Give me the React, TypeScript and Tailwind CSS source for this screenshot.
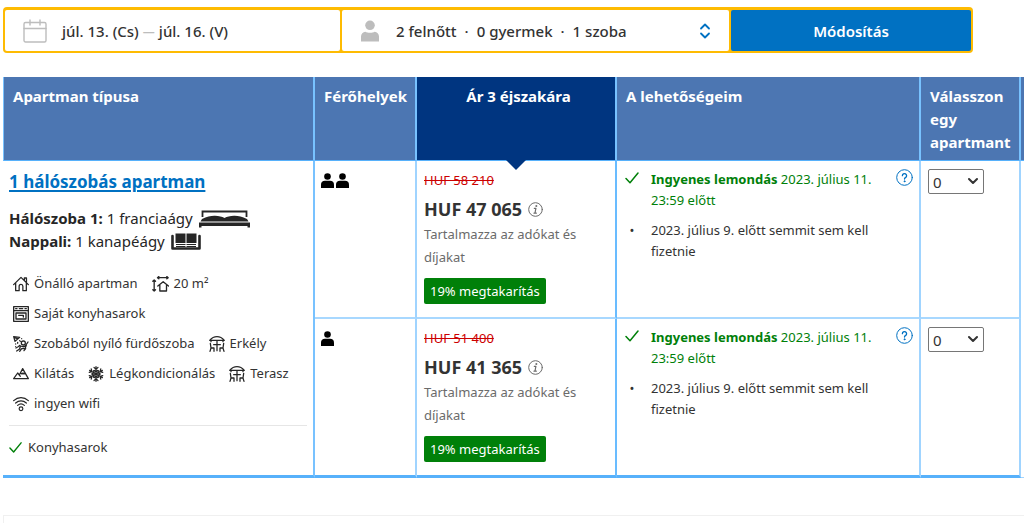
import React from "react";

type IconProps = { className?: string };

const stroke = {
  fill: "none",
  stroke: "currentColor",
  strokeWidth: 1.5,
  strokeLinecap: "round" as const,
  strokeLinejoin: "round" as const,
};

function CalendarIcon() {
  return (
    <svg className="h-6 w-6 shrink-0 text-[#bdbdbd]" viewBox="0 0 24 24" aria-hidden="true" {...stroke} strokeWidth={1.4}>
      <rect x="1" y="3.500" width="22" height="19.500" rx="1.5" />
      <path d="M1 9.500h22M7 1v5M17 1v5" />
    </svg>
  );
}

function PersonIcon({ className }: IconProps) {
  return (
    <svg className={className} viewBox="0 0 18 21" aria-hidden="true" fill="currentColor">
      <circle cx="9" cy="4.800" r="4.800" />
      <path d="M0 21v-5C0 13.200 2 11.800 4.300 11.200 5.600 12 7.200 12.300 9 12.300s3.400-.3 4.700-1.100C16 11.800 18 13.200 18 16v5z" />
    </svg>
  );
}

function GuestIcon() {
  return (
    <svg className="h-[15px] w-[13px] text-black" viewBox="0 0 13 15" aria-hidden="true" fill="currentColor">
      <circle cx="6.500" cy="3.500" r="3.300" />
      <path d="M0 15v-3.500C0 9 1.500 7.700 4 7.700h5c2.500 0 4 1.300 4 3.800V15z" />
    </svg>
  );
}

function UpDownIcon() {
  return (
    <svg className="h-4 w-3 shrink-0 text-[#0071c2]" viewBox="0 0 12 16" aria-hidden="true" {...stroke} strokeWidth={1.8}>
      <path d="M2 5.500l4-4 4 4M2 10.500l4 4 4-4" />
    </svg>
  );
}

function BedIcon() {
  return (
    <svg className="h-[18px] w-[51px] shrink-0" viewBox="0 0 51 18" aria-hidden="true">
      <path d="M3.500 7V1.500h44V7" fill="none" stroke="#262626" strokeWidth="1.800" />
      <path d="M3 9c5-2.500 9-3.300 13-3.200 4 .1 7 1 9.500 2.200C28 6.800 31 5.900 35 5.800 39 5.700 43 6.500 48 9l1.500 2.500H1.500z" fill="#262626" />
      <path d="M0 12.500h51v5h-2.500v-1.500h-46v1.500H0z" fill="#262626" />
    </svg>
  );
}

function SofaIcon() {
  return (
    <svg className="h-[18px] w-[30px] shrink-0" viewBox="0 0 30 18" aria-hidden="true">
      <path d="M4.500.5h10v9.500h-10zM15.500.5h10v9.500h-10z" fill="#262626" />
      <path d="M5 11.500h9.500M15.500 11.500H25M5 13.500h9.500M15.500 13.500H25" stroke="#262626" strokeWidth="1" />
      <path d="M1.500 3v12.500h27V3" fill="none" stroke="#262626" strokeWidth="2.600" strokeLinejoin="round" strokeLinecap="round" />
    </svg>
  );
}

const icon = "h-4 w-4 shrink-0 text-[#262626]";

function HouseIcon() {
  return (
    <svg className={icon} viewBox="0 0 24 24" aria-hidden="true" {...stroke} strokeWidth={1.900}>
      <path d="M1 13L12 2l11 11M17 6.500V3h3.200v7M4 11v11h5.200v-6.500a2.800 2.800 0 0 1 5.600 0V22H20V11" />
    </svg>
  );
}

function SizeIcon() {
  return (
    <svg className="h-4 w-[17px] shrink-0 text-[#262626]" viewBox="0 0 25 24" aria-hidden="true" {...stroke} strokeWidth={2}>
      <path d="M8 2.500h16M10 .8L8 2.500l2 1.700M22 .8l2 1.700-2 1.700" />
      <path d="M3 6v16.500M1 8l2-2 2 2M1 20.500l2 2 2-2" />
      <path d="M8.500 15L16.500 8.500 24.500 15M11.500 14v8.500h10V14" />
    </svg>
  );
}

function OvenIcon() {
  return (
    <svg className={icon} viewBox="0 0 24 24" aria-hidden="true" {...stroke} strokeWidth={2}>
      <path d="M1 1h22v22H1zM1 7h22" />
      <rect x="4.500" y="10.500" width="15" height="9" />
      <path d="M8.500 14h7v2.500M4 4h2M9.500 4h5M18 4h2" />
    </svg>
  );
}

function ShowerIcon() {
  return (
    <svg className={icon} viewBox="0 0 24 24" aria-hidden="true" {...stroke} strokeWidth={1.900}>
      <path d="M1 1l9 1-7 6zM4 12v.1M7 9.500v1.500M10 7l1 1M4 16v.1M13 4v.1M3 3l4 1" />
      <circle cx="15.500" cy="10.500" r="3" />
      <path d="M10 14c-1 2-3 3-5.500 4M11.500 15c3 1.500 6 1.500 7.500-1l3.500-5M11 15l-1 4.500-4.500 3M20 14l-2 5h-5l-3 4M16.500 22l2.500-3" />
    </svg>
  );
}

function PatioIcon() {
  return (
    <svg className={icon} viewBox="0 0 24 24" aria-hidden="true" {...stroke} strokeWidth={1.900}>
      <path d="M1 6.500C4 3 8 1 12 1s8 2 11 5.500zM12 6.500V22M7 13h10M3 7v1.500M21 7v1.500" />
      <path d="M2 11l1 7h4.500v5M3 18l-1.500 5M22 11l-1 7h-4.500v5M21 18l1.500 5" />
    </svg>
  );
}

function MountainIcon() {
  return (
    <svg className={icon} viewBox="0 0 24 24" aria-hidden="true" {...stroke} strokeWidth={1.900}>
      <path d="M1 19l6-8.500 2.500 3L14.500 4 23 19zM11.500 10.500l2 1.500 1.500-1.500 1.500 1.500 1.500-1M9.500 13.500l1.500 2" />
    </svg>
  );
}

function SnowIcon() {
  return (
    <svg className={icon} viewBox="0 0 24 24" aria-hidden="true" {...stroke} strokeWidth={1.900}>
      {[0, 60, 120, 180, 240, 300].map((a) => (
        <path key={a} transform={`rotate(${a} 12 12)`} d="M12 12V1M9 2l3 3 3-3M9.500 6.500L12 9l2.500-2.500" />
      ))}
    </svg>
  );
}

function WifiIcon() {
  return (
    <svg className={icon} viewBox="0 0 24 24" aria-hidden="true" {...stroke} strokeWidth={1.800}>
      <path d="M1 7C7.500.8 16.500.8 23 7M4 10.500c4.700-4.300 11.300-4.300 16 0M7 14c3-2.700 7-2.700 10 0" />
      <circle cx="12" cy="19" r="2.800" />
    </svg>
  );
}

function CheckIcon({ className }: IconProps) {
  return (
    <svg className={className} viewBox="0 0 14 14" aria-hidden="true" {...stroke}>
      <path d="M1 7.500l4 4.300L13 2" />
    </svg>
  );
}

function InfoIcon() {
  return (
    <svg className="h-[15px] w-[15px] shrink-0 text-[#6b6b6b]" viewBox="0 0 15 15" aria-hidden="true" {...stroke} strokeWidth={1}>
      <circle cx="7.500" cy="7.500" r="6.800" />
      <path d="M6.300 6.300h1.600L7 11M6 11.200h2.300" strokeWidth={1.200} />
      <circle cx="8.200" cy="4" r=".5" fill="currentColor" />
    </svg>
  );
}

function HelpIcon() {
  return (
    <svg className="h-[17px] w-[17px] text-[#0071c2]" viewBox="0 0 17 17" aria-hidden="true" {...stroke} strokeWidth={1}>
      <circle cx="8.500" cy="8.500" r="7.800" />
      <path d="M6.400 6.700a2.100 2.100 0 1 1 3.300 1.700c-.8.5-1.200.8-1.200 1.700" strokeWidth={1.300} />
      <circle cx="8.500" cy="12.300" r=".5" fill="currentColor" />
    </svg>
  );
}

const features: { label: string; Icon: () => React.JSX.Element }[][] = [
  [
    { label: "Önálló apartman", Icon: HouseIcon },
    { label: "20 m²", Icon: SizeIcon },
  ],
  [{ label: "Saját konyhasarok", Icon: OvenIcon }],
  [
    { label: "Szobából nyíló fürdőszoba", Icon: ShowerIcon },
    { label: "Erkély", Icon: PatioIcon },
  ],
  [
    { label: "Kilátás", Icon: MountainIcon },
    { label: "Légkondicionálás", Icon: SnowIcon },
    { label: "Terasz", Icon: PatioIcon },
  ],
  [{ label: "ingyen wifi", Icon: WifiIcon }],
];

const offers = [
  { id: "two", guests: 2, before: "HUF 58 210", price: "HUF 47 065" },
  { id: "one", guests: 1, before: "HUF 51 400", price: "HUF 41 365" },
];

function SearchBar() {
  return (
    <form className="mr-[51px] flex h-[46px] gap-0.5 rounded-sm bg-[#febb02] p-0.5 pt-[3px] text-[15px] font-medium text-[#333]" onSubmit={(e) => e.preventDefault()}>
      <button type="button" className="flex w-[335px] items-center gap-[15px] rounded-xs bg-white pl-[18px]">
        <CalendarIcon />
        <span className="flex items-center gap-1 pt-0.5">
          júl. 13. (Cs) <span className="text-[12px] text-[#bdbdbd]">—</span> júl. 16. (V)
        </span>
      </button>
      <button type="button" className="flex flex-1 items-center rounded-xs bg-white pr-[18px] pl-[19px]">
        <PersonIcon className="mr-[17px] h-[22px] w-[18px] shrink-0 text-[#bdbdbd]" />
        <span className="flex flex-1 gap-2 pt-0.5">
          <span>2 felnőtt</span>
          <span>·</span>
          <span>0 gyermek</span>
          <span>·</span>
          <span>1 szoba</span>
        </span>
        <UpDownIcon />
      </button>
      <button type="submit" className="w-60 rounded-xs bg-[#0071c2] pt-0.5 font-semibold text-white">
        Módosítás
      </button>
    </form>
  );
}

function RoomCell() {
  return (
    <td rowSpan={2} className="border-r-2 border-b-3 border-r-[#78c2ff] border-b-[#57b1fb] pt-2 pr-1.5 pl-1.5">
      <a href="#room" className="text-[17px] leading-[26px] font-bold text-[#0071c2] underline decoration-2 underline-offset-2">
        1 hálószobás apartman
      </a>
      <div className="mt-3 text-[15px] leading-[23px] text-[#262626]">
        <p className="flex items-center gap-1.5">
          <span><b>Hálószoba 1:</b> 1 franciaágy</span>
          <BedIcon />
        </p>
        <p className="flex items-center gap-1.5">
          <span><b>Nappali:</b> 1 kanapéágy</span>
          <SofaIcon />
        </p>
      </div>
      <ul className="mt-4 pl-1 text-[13px] text-[#333]">
        {features.map((row, i) => (
          <li key={i} className="flex h-[30px] items-center gap-3.5">
            {row.map(({ label, Icon }) => (
              <span key={label} className="flex items-center gap-[5px] whitespace-nowrap">
                <Icon />
                {label}
              </span>
            ))}
          </li>
        ))}
      </ul>
      <hr className="mt-1.5 border-[#e6e6e6]" />
      <p className="mt-[11px] flex items-center gap-1.5 text-[13px] leading-5 text-[#333]">
        <CheckIcon className="h-[13px] w-[13px] text-[#008009]" />
        Konyhasarok
      </p>
    </td>
  );
}

export default function App() {
  const th = "border-r-2 border-b border-b-[#57b1fb] pr-1 pl-[9px] pt-2 pb-1.5 text-left font-bold";
  return (
    <main className="bg-white pt-[7px] pl-[3px] font-['Noto_Sans','Open_Sans',sans-serif] text-[#333]">
      <SearchBar />
      <table className="mt-6 w-full table-fixed border-separate border-spacing-0">
        <colgroup>
          <col className="w-[312px]" />
          <col className="w-[102px]" />
          <col className="w-[200px]" />
          <col />
          <col className="w-[100px]" />
          <col className="w-[3px]" />
        </colgroup>
        <thead>
          <tr className="bg-[#4c76b2] align-top text-[15px] leading-[23px] text-white">
            <th className={`${th} border-l border-[#78c2ff]`}>Apartman típusa</th>
            <th className={`${th} border-[#78c2ff]`}>Férőhelyek</th>
            <th className={`${th} relative border-[#78c2ff] bg-[#003580] text-center!`}>
              Ár 3 éjszakára
              <svg className="absolute top-full left-1/2 h-2.5 w-5 -translate-x-1/2 text-[#003580]" viewBox="0 0 20 10" aria-hidden="true">
                <path d="M0 0h20L10 10z" fill="currentColor" />
              </svg>
            </th>
            <th className={`${th} border-[#78c2ff]`}>A lehetőségeim</th>
            <th className={`${th} border-[#78c2ff]`}>Válasszon egy apartmant</th>
            <td className="border-b border-[#57b1fb]" />
          </tr>
        </thead>
        <tbody className="align-top">
          {offers.map((o, i) => {
            const bottom = i === 0 ? "h-[158px] border-b-2 border-b-[#a8d8ff]" : "h-[159px] border-b-3 border-b-[#57b1fb]";
            return (
              <tr key={o.id}>
                {i === 0 && <RoomCell />}
                <td className={`${bottom} border-r-2 border-r-[#a0d4ff] px-1.5 pt-3`}>
                  <div className="flex gap-0.5" role="img" aria-label={`${o.guests} fő`}>
                    {Array.from({ length: o.guests }, (_, n) => (
                      <GuestIcon key={n} />
                    ))}
                  </div>
                </td>
                <td className={`${bottom} border-r-2 border-r-[#69bcff] px-[7px] pt-2`}>
                  <p className="text-[13px] leading-[22px] text-[#cc0000]"><s>{o.before}</s></p>
                  <p className="mt-1 flex items-center gap-1.5 text-[18px] leading-7 font-bold">
                    {o.price}
                    <InfoIcon />
                  </p>
                  <p className="text-[13px] leading-[23px] text-[#6b6b6b]">Tartalmazza az adókat és díjakat</p>
                  <p className="mt-[9px] inline-block rounded-xs bg-[#008009] px-1.5 text-[13px] leading-[26px] text-white">
                    19% megtakarítás
                  </p>
                </td>
                <td className={`${bottom} border-r-2 border-r-[#a0d4ff] pt-2 pr-1.5 pl-2`}>
                  <div className="flex items-start">
                    <ul className="flex-1 text-[13px] leading-[21px]">
                      <li className="flex text-[#008009]">
                        <CheckIcon className="mt-0.5 mr-3 h-3.5 w-3.5 shrink-0" />
                        <span className="max-w-[230px]"><b>Ingyenes lemondás</b> 2023. július 11. 23:59 előtt</span>
                      </li>
                      <li className="mt-[9px] flex">
                        <span className="mr-3 w-3.5 shrink-0 text-center">•</span>
                        <span className="max-w-[230px]">2023. július 9. előtt semmit sem kell fizetnie</span>
                      </li>
                    </ul>
                    <button type="button" aria-label="Részletek"><HelpIcon /></button>
                  </div>
                </td>
                <td className={`${bottom} border-r-2 border-r-[#a0d4ff] px-[7px] pt-2`}>
                  <div className="relative w-14">
                    <select aria-label="Válasszon egy apartmant" className="h-[25px] w-full appearance-none rounded-xs border border-[#767676] bg-white pl-1 text-[15px] leading-5">
                      <option>0</option>
                      <option>1</option>
                    </select>
                    <svg className="pointer-events-none absolute top-2 right-1.5 h-2 w-2.5" viewBox="0 0 10 8" aria-hidden="true" {...stroke} strokeWidth={2}>
                      <path d="M1 2l4 4 4-4" />
                    </svg>
                  </div>
                </td>
                <td className={i === 1 ? "border-b border-[#a0d4ff]" : ""} />
              </tr>
            );
          })}
        </tbody>
      </table>
      <section className="mt-[37px] h-2 border-t border-l border-[#f0f0f0]" />
    </main>
  );
}
